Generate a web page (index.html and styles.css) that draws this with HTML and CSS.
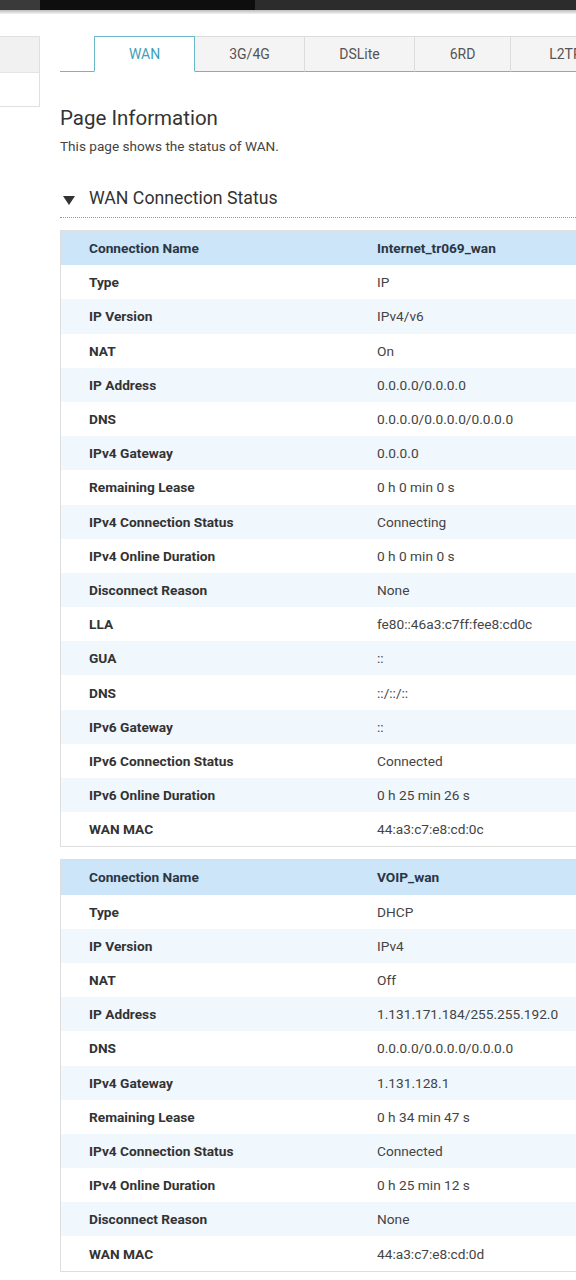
FILE: index.html
```html
<!DOCTYPE html>
<html>
<head>
<meta charset="utf-8">
<link rel="stylesheet" href="styles.css">
</head>
<body>
<div class="topbar"><div class="tb-a"></div><div class="tb-b"></div><div class="tb-c"></div></div>
<div class="shade"></div>
<div class="page">
  <div class="sidebar"><div class="sb-top"></div><div class="sb-bottom"></div></div>
  <div class="main">
    <div class="tabs">
      <div class="tab-spacer"></div>
      <div class="tab active w100">WAN</div>
      <div class="tab w110">3G/4G</div>
      <div class="tab w110">DSLite</div>
      <div class="tab w96">6RD</div>
      <div class="tab w110">L2TP</div>
      <div class="tab-rest"></div>
    </div>
    <h1 class="title">Page Information</h1>
    <p class="desc">This page shows the status of WAN.</p>
    <div class="section">
      <svg class="tri" width="12" height="10" viewBox="0 0 12 10"><polygon points="0,1 12,1 6,10" fill="#333"/></svg>
      <span>WAN Connection Status</span>
    </div>

    <div class="table">
      <div class="row head"><div class="lab">Connection Name</div><div class="val">Internet_tr069_wan</div></div>
      <div class="row"><div class="lab">Type</div><div class="val">IP</div></div>
      <div class="row alt"><div class="lab">IP Version</div><div class="val">IPv4/v6</div></div>
      <div class="row"><div class="lab">NAT</div><div class="val">On</div></div>
      <div class="row alt"><div class="lab">IP Address</div><div class="val">0.0.0.0/0.0.0.0</div></div>
      <div class="row"><div class="lab">DNS</div><div class="val">0.0.0.0/0.0.0.0/0.0.0.0</div></div>
      <div class="row alt"><div class="lab">IPv4 Gateway</div><div class="val">0.0.0.0</div></div>
      <div class="row"><div class="lab">Remaining Lease</div><div class="val">0 h 0 min 0 s</div></div>
      <div class="row alt"><div class="lab">IPv4 Connection Status</div><div class="val">Connecting</div></div>
      <div class="row"><div class="lab">IPv4 Online Duration</div><div class="val">0 h 0 min 0 s</div></div>
      <div class="row alt"><div class="lab">Disconnect Reason</div><div class="val">None</div></div>
      <div class="row"><div class="lab">LLA</div><div class="val">fe80::46a3:c7ff:fee8:cd0c</div></div>
      <div class="row alt"><div class="lab">GUA</div><div class="val">::</div></div>
      <div class="row"><div class="lab">DNS</div><div class="val">::/::/::</div></div>
      <div class="row alt"><div class="lab">IPv6 Gateway</div><div class="val">::</div></div>
      <div class="row"><div class="lab">IPv6 Connection Status</div><div class="val">Connected</div></div>
      <div class="row alt"><div class="lab">IPv6 Online Duration</div><div class="val">0 h 25 min 26 s</div></div>
      <div class="row"><div class="lab">WAN MAC</div><div class="val">44:a3:c7:e8:cd:0c</div></div>
    </div>

    <div class="table second">
      <div class="row head"><div class="lab">Connection Name</div><div class="val">VOIP_wan</div></div>
      <div class="row"><div class="lab">Type</div><div class="val">DHCP</div></div>
      <div class="row alt"><div class="lab">IP Version</div><div class="val">IPv4</div></div>
      <div class="row"><div class="lab">NAT</div><div class="val">Off</div></div>
      <div class="row alt"><div class="lab">IP Address</div><div class="val">1.131.171.184/255.255.192.0</div></div>
      <div class="row"><div class="lab">DNS</div><div class="val">0.0.0.0/0.0.0.0/0.0.0.0</div></div>
      <div class="row alt"><div class="lab">IPv4 Gateway</div><div class="val">1.131.128.1</div></div>
      <div class="row"><div class="lab">Remaining Lease</div><div class="val">0 h 34 min 47 s</div></div>
      <div class="row alt"><div class="lab">IPv4 Connection Status</div><div class="val">Connected</div></div>
      <div class="row"><div class="lab">IPv4 Online Duration</div><div class="val">0 h 25 min 12 s</div></div>
      <div class="row alt"><div class="lab">Disconnect Reason</div><div class="val">None</div></div>
      <div class="row"><div class="lab">WAN MAC</div><div class="val">44:a3:c7:e8:cd:0d</div></div>
    </div>
  </div>
</div>
</body>
</html>
```
FILE: styles.css
```css
html, body {
  margin: 0;
  padding: 0;
  background: #fff;
  overflow: hidden;
  font-family: Roboto, "Liberation Sans", sans-serif;
  color: #333;
}
.topbar {
  display: flex;
  height: 10px;
}
.tb-a { width: 40px; background: #3a3a3a; }
.tb-b { width: 215px; background: #0e0e0e; }
.tb-c { flex: 1; background: #2c2c2c; }
.shade {
  height: 4px;
  background: linear-gradient(#bdbdbd, #f2f2f2);
}
.page {
  display: flex;
  width: 640px;
}
.sidebar {
  width: 39px;
  margin-top: 22px;
  border: 1px solid #e0e0e0;
  border-left: none;
  align-self: flex-start;
  flex: none;
}
.sb-top { height: 35px; background: #f1f1f1; border-bottom: 1px solid #e4e4e4; }
.sb-bottom { height: 33px; background: #fff; }
.main {
  margin-left: 20px;
  flex: 1;
  min-width: 0;
}
.tabs {
  display: flex;
  margin-top: 22px;
  height: 36px;
}
.tab-spacer {
  width: 34px;
  border-bottom: 1px solid #6bb8c9;
  flex: none;
}
.tab-rest {
  flex: 1;
  border-bottom: 1px solid #6bb8c9;
}
.tab {
  flex: none;
  box-sizing: border-box;
  height: 36px;
  display: flex;
  align-items: center;
  justify-content: center;
  background: #f4f4f4;
  border: 1px solid #dcdcdc;
  border-left: none;
  border-bottom: 1px solid #6bb8c9;
  font-size: 14px;
  color: #555;
}
.tab.active {
  background: #fff;
  border: 1px solid #6bb8c9;
  border-bottom: 1px solid #fff;
  color: #3fa0b7;
}
.w100 { width: 101px; }
.w110 { width: 110px; }
.w96 { width: 96px; }
.title {
  margin: 34px 0 0;
  font-size: 20.5px;
  font-weight: 400;
  line-height: 24px;
  color: #333;
}
.desc {
  margin: 8px 0 0;
  font-size: 13.6px;
  line-height: 16px;
  color: #444;
}
.section {
  margin-top: 33px;
  display: flex;
  align-items: center;
  height: 22px;
  padding-bottom: 8px;
  border-bottom: 1px dotted #9a9a9a;
  font-size: 17.7px;
  color: #333;
}
.tri {
  margin-left: 3px;
  margin-right: 14px;
  margin-top: 3px;
}
.table {
  margin-top: 12px;
  border: 1px solid #dedede;
  border-right: none;
}
.row {
  display: flex;
  align-items: center;
  height: 34.2px;
  font-size: 13.7px;
}
.row.alt { background: #f0f7fd; }
.row.head { background: #cce5f9; }
.lab {
  width: 288px;
  padding-left: 28px;
  font-weight: 700;
  color: #333;
  flex: none;
}
.head .lab, .head .val { color: #2a3644; font-weight: 700; }
.val {
  color: #444;
}
```
